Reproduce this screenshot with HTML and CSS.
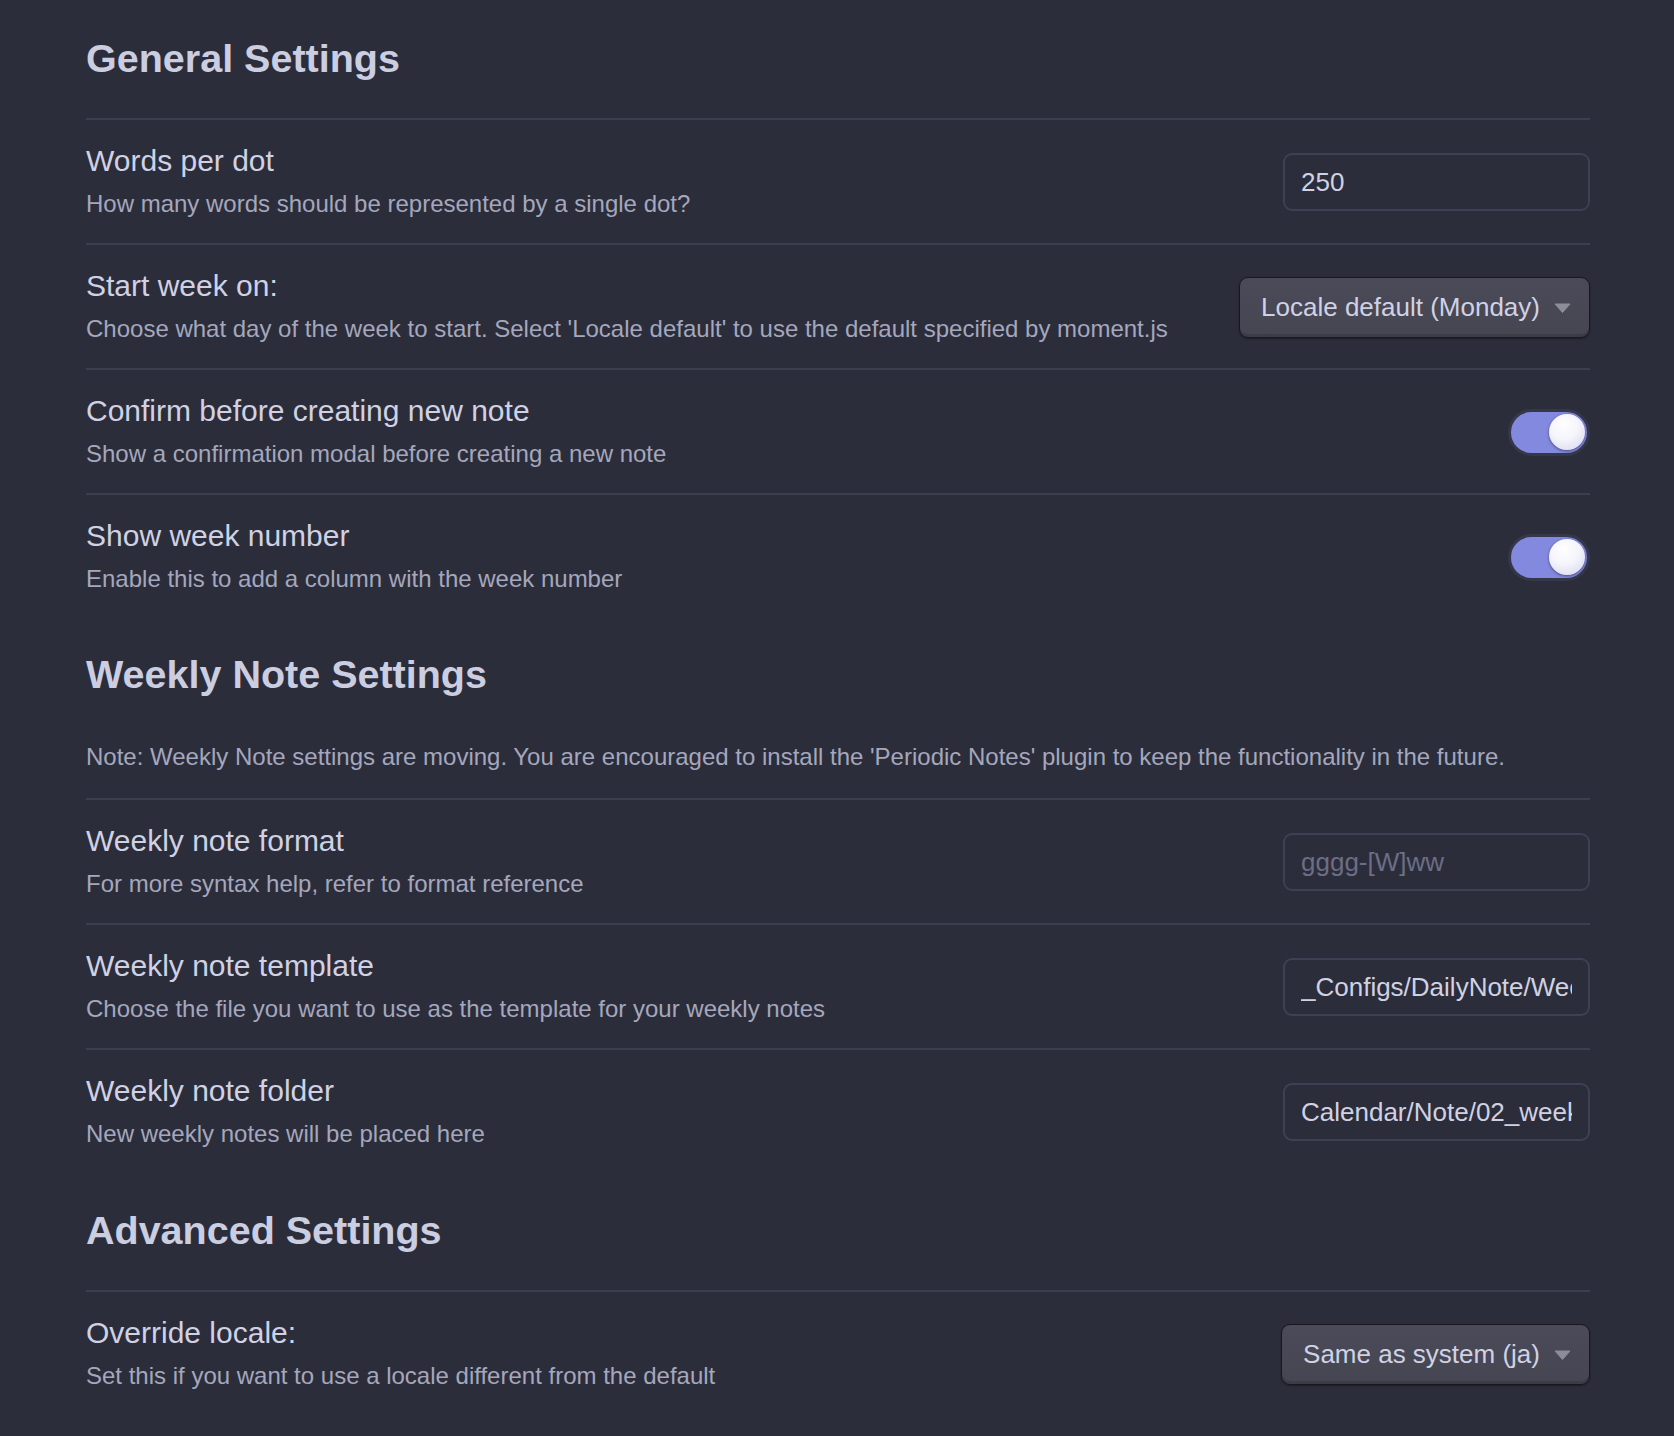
FILE: index.html
```html
<!DOCTYPE html>
<html lang="en">
<head>
<meta charset="utf-8">
<title>Calendar Settings</title>
<link rel="stylesheet" href="styles.css">
</head>
<body>
<div class="settings">
  <h2 class="heading">General Settings</h2>

  <div class="item">
    <div class="info">
      <div class="name">Words per dot</div>
      <div class="desc">How many words should be represented by a single dot?</div>
    </div>
    <div class="control"><input class="text-input" type="text" value="250"></div>
  </div>

  <div class="item">
    <div class="info">
      <div class="name">Start week on:</div>
      <div class="desc">Choose what day of the week to start. Select 'Locale default' to use the default specified by moment.js</div>
    </div>
    <div class="control">
      <div class="dropdown"><span>Locale default (Monday)</span><svg class="caret" width="17" height="10" viewBox="0 0 17 10"><path d="M1 1 H16 L8.5 9.5 Z" fill="#8d8d99" stroke="#8d8d99" stroke-width="1" stroke-linejoin="round"/></svg></div>
    </div>
  </div>

  <div class="item">
    <div class="info">
      <div class="name">Confirm before creating new note</div>
      <div class="desc">Show a confirmation modal before creating a new note</div>
    </div>
    <div class="control"><div class="toggle"><div class="knob"></div></div></div>
  </div>

  <div class="item">
    <div class="info">
      <div class="name">Show week number</div>
      <div class="desc">Enable this to add a column with the week number</div>
    </div>
    <div class="control"><div class="toggle"><div class="knob"></div></div></div>
  </div>

  <h2 class="heading">Weekly Note Settings</h2>
  <p class="note">Note: Weekly Note settings are moving. You are encouraged to install the 'Periodic Notes' plugin to keep the functionality in the future.</p>

  <div class="item">
    <div class="info">
      <div class="name">Weekly note format</div>
      <div class="desc">For more syntax help, refer to format reference</div>
    </div>
    <div class="control"><input class="text-input" type="text" placeholder="gggg-[W]ww"></div>
  </div>

  <div class="item">
    <div class="info">
      <div class="name">Weekly note template</div>
      <div class="desc">Choose the file you want to use as the template for your weekly notes</div>
    </div>
    <div class="control"><input class="text-input" type="text" value="_Configs/DailyNote/WeeklyTemplate"></div>
  </div>

  <div class="item">
    <div class="info">
      <div class="name">Weekly note folder</div>
      <div class="desc">New weekly notes will be placed here</div>
    </div>
    <div class="control"><input class="text-input" type="text" value="Calendar/Note/02_weekly"></div>
  </div>

  <h2 class="heading heading-adv">Advanced Settings</h2>

  <div class="item">
    <div class="info">
      <div class="name">Override locale:</div>
      <div class="desc">Set this if you want to use a locale different from the default</div>
    </div>
    <div class="control">
      <div class="dropdown"><span>Same as system (ja)</span><svg class="caret" width="17" height="10" viewBox="0 0 17 10"><path d="M1 1 H16 L8.5 9.5 Z" fill="#8d8d99" stroke="#8d8d99" stroke-width="1" stroke-linejoin="round"/></svg></div>
    </div>
  </div>
</div>
</body>
</html>
```

FILE: styles.css
```css
html, body {
  margin: 0;
  padding: 0;
  background: #2c2d3a;
}

body {
  font-family: "Liberation Sans", Arial, Helvetica, sans-serif;
  color: #cfd1e3;
}

.settings {
  padding: 2px 84px 0 86px;
}

.heading {
  margin: 32px 0 36px;
  font-size: 39.5px;
  line-height: 48px;
  font-weight: 700;
  color: #cbcde1;
}

.heading-adv {
  margin-top: 33px;
}

.note {
  margin: 42px 0 24px;
  font-size: 24px;
  line-height: 34px;
  color: #a4a7bd;
}

.item {
  display: flex;
  align-items: center;
  justify-content: space-between;
  gap: 24px;
  border-top: 2px solid #3c3e4f;
  padding: 23px 0 22px;
}

.info {
  flex: 1 1 auto;
  min-width: 0;
}

.name {
  font-size: 30px;
  line-height: 36px;
  color: #d0d2e4;
}

.desc {
  margin-top: 8px;
  font-size: 24px;
  line-height: 34px;
  color: #a4a7bd;
}

.control {
  flex: 0 0 auto;
  display: flex;
  align-items: center;
  justify-content: flex-end;
}

.text-input {
  box-sizing: border-box;
  width: 307px;
  height: 58px;
  padding: 0 16px;
  border: 2px solid #3e4053;
  border-radius: 9px;
  background: #2c2d3a;
  color: #d0d2e4;
  font-family: "Liberation Sans", Arial, Helvetica, sans-serif;
  font-size: 26px;
  outline: none;
}

.text-input::placeholder {
  color: #6b6e86;
}

.dropdown {
  box-sizing: border-box;
  height: 61px;
  display: flex;
  align-items: center;
  gap: 14px;
  padding: 0 18px 0 21px;
  border: 1.5px solid #18181e;
  border-radius: 9px;
  background: linear-gradient(#4a4a58, #464653);
  box-shadow: inset 0 -3px 0 rgba(0, 0, 0, 0.14), 0 1px 2px rgba(0, 0, 0, 0.35);
  font-size: 26px;
  color: #d0d2e4;
  white-space: nowrap;
}

.caret {
  display: block;
  flex: 0 0 auto;
  margin-top: 1px;
}

.toggle {
  box-sizing: border-box;
  width: 82px;
  height: 47px;
  border-radius: 24px;
  border: 3px solid #35374a;
  background: #8289df;
  display: flex;
  align-items: center;
  justify-content: flex-end;
  padding-right: 2px;
}

.knob {
  width: 36px;
  height: 36px;
  border-radius: 50%;
  background: radial-gradient(circle at 42% 30%, #ffffff 0%, #f4f4fb 45%, #d4d5ee 100%);
  box-shadow: 0 1px 3px rgba(0, 0, 0, 0.45);
}
```
